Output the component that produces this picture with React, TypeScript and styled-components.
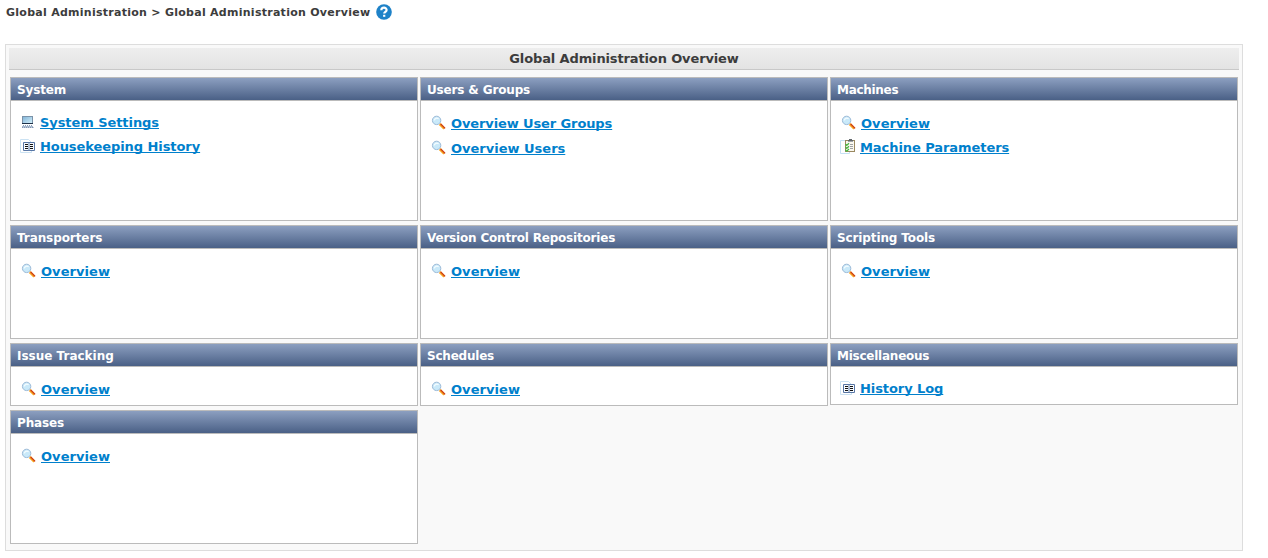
import React from "react";
import styled, { createGlobalStyle } from "styled-components";

const GlobalStyle = createGlobalStyle`
  * { box-sizing: border-box; }
  html, body { margin: 0; background: #fff; }
  body { font-family: "DejaVu Sans", Verdana, sans-serif; font-weight: bold; color: #3c3c3c; }
`;

const Page = styled.div`
  width: 1268px;
  height: 558px;
  padding: 0 25px 0 5px;
  overflow: hidden;
`;

const Breadcrumb = styled.header`
  display: flex;
  align-items: center;
  height: 24px;
  margin-bottom: 20px;
  padding-left: 1px;
  font-size: 11px;
  white-space: nowrap;
`;

const Trail = styled.span`
  width: 364px;
  margin-right: 6px;
  letter-spacing: 0.27px;
`;

const Panel = styled.main`
  width: 1238px;
  height: 507px;
  padding: 3px;
  background: #f9f9f9;
  border: 1px solid #ddd;
`;

const PanelTitle = styled.h1`
  height: 22px;
  margin: 0 0 7px;
  border-bottom: 1px solid #c8c8c8;
  background: linear-gradient(#eee, #e3e3e3);
  font-size: 13px;
  letter-spacing: -0.13px;
  line-height: 21px;
  text-align: center;
`;

const Grid = styled.div`
  display: grid;
  grid-template-columns: repeat(3, 408px);
  grid-template-rows: 144px 114px 63px 134px;
  gap: 4px 2px;
  margin-left: 1px;
`;

const Card = styled.section<{ $short?: boolean }>`
  height: ${(p) => (p.$short ? "62px" : "100%")};
  background: #fff;
  border: 1px solid #bbb;
`;

const CardHeader = styled.h2<{ $tracking: number }>`
  height: 23px;
  margin: 0;
  padding: 1px 0 0 6px;
  border-bottom: 1px solid #bbb;
  background: linear-gradient(#8c9fc0, #4a6086);
  color: #fff;
  font-size: 12px;
  letter-spacing: ${(p) => p.$tracking}px;
  line-height: 22px;
`;

const Links = styled.ul<{ $tight?: boolean }>`
  display: flex;
  flex-direction: column;
  margin: 0;
  padding: ${(p) => (p.$tight ? "14px" : "15px")} 0 0 9px;
  list-style: none;
`;

const Item = styled.li<{ $height: number; $magnifier: boolean }>`
  display: flex;
  height: ${(p) => p.$height}px;
  gap: ${(p) => (p.$magnifier ? 5 : 4)}px;
  svg { flex: none; overflow: visible; margin-top: ${(p) => (p.$magnifier ? -1 : 0)}px; }
`;

const Link = styled.a<{ $tracking: number }>`
  color: #0080cc;
  font-size: 13px;
  letter-spacing: ${(p) => p.$tracking}px;
  line-height: 16px;
  text-decoration: underline;
  text-decoration-thickness: 1px;
  text-decoration-skip-ink: none;
  text-underline-offset: 1px;
  white-space: nowrap;
`;

const HelpIcon = () => (
  <svg width="16" height="16" viewBox="0 0 16 16">
    <circle cx="8" cy="8" r="7.8" fill="#1e82c8" />
    <path d="M5.3 6.2C5.4 2.8 10.7 3 10.6 6C10.6 7.8 8.2 7.9 8.2 9.6" fill="none" stroke="#fff" strokeWidth="2.2" />
    <rect x="7.1" y="10.8" width="2.2" height="2" fill="#fff" />
  </svg>
);

const SearchIcon = () => (
  <svg width="16" height="16" viewBox="0 0 16 16">
    <path d="M9.8 9l4.6 4.6" stroke="#f7a21b" strokeWidth="2.6" />
    <path d="M10.6 8.9l4.5 4.5" stroke="#c9341c" strokeWidth="1.2" />
    <circle cx="6.6" cy="5.4" r="4.2" fill="#c9e9f9" stroke="#9dbbd8" />
    <path d="M4.3 5.4C4.6 3.2 7 2.6 8.6 3.7" fill="none" stroke="#f5fcff" strokeWidth="1.3" />
  </svg>
);

const ComputerIcon = () => (
  <svg width="16" height="16" viewBox="0 0 16 16">
    <defs>
      <linearGradient id="screen" x2="1" y2="1">
        <stop stopColor="#7fb2d6" />
        <stop offset="1" stopColor="#d7f2fc" />
      </linearGradient>
    </defs>
    <rect x="2.5" y="1.5" width="10" height="7" fill="url(#screen)" stroke="#7b93a9" />
    <path d="M2 8.5h11" stroke="#1e3148" />
    <path d="M3 10.5h9" stroke="#8b9fba" strokeDasharray="1 1" />
    <path d="M2 11.5h11" stroke="#a9b9ce" />
    <path d="M2 12.5h12" stroke="#8296b4" strokeDasharray="1.5 .5" />
  </svg>
);

const BookIcon = () => (
  <svg width="16" height="16" viewBox="0 0 16 16">
    <path d="M.5 .5h8l3 3v10H.5z" fill="#fff" stroke="#cbe2f3" />
    <path d="M3.5 3.5h11v8h-11z" fill="#f8fbff" stroke="#5876a5" />
    <path d="M9 3v9" stroke="#6984ad" />
    <path d="M5 5.5h3M5 7.5h3M5 9.5h3M10 5.5h3M10 7.5h3M10 9.5h3" stroke="#111" />
  </svg>
);

const ChecklistIcon = () => (
  <svg width="16" height="16" viewBox="0 0 16 16">
    <path d="M.5 .5h9v13h-9z" fill="#fff" stroke="#c5e1f4" />
    <rect x="5.5" y=".5" width="9" height="11" fill="#faf8ef" stroke="#9a8860" />
    <path d="M8 .5h5M9 -.5h3" stroke="#62676b" />
    <path d="M8 1.5h5" stroke="#a0a4a6" />
    <path d="M5.5 4.2l1.2 1.2L9 3.2M5.5 7.2l1.2 1.2L9 6.2M5.5 10l1.2 1.2L9 9" fill="none" stroke="#45b53f" strokeWidth="1.2" />
    <path d="M10 4.5h3M10 6.5h3M10 8.5h3" stroke="#a0a3a5" />
  </svg>
);

const icons = { search: SearchIcon, computer: ComputerIcon, book: BookIcon, checklist: ChecklistIcon };
type Entry = { label: string; icon: keyof typeof icons; height?: number; tracking?: number };
type Section = { title: string; entries: Entry[]; tight?: boolean; short?: boolean; tracking?: number };
const overview: Entry[] = [{ label: "Overview", icon: "search", tracking: 0.06 }];

const sections: Section[] = [
  {
    title: "System",
    tight: true,
    tracking: -0.15,
    entries: [
      { label: "System Settings", icon: "computer", tracking: -0.07 },
      { label: "Housekeeping History", icon: "book", tracking: -0.07 },
    ],
  },
  {
    title: "Users & Groups",
    tracking: -0.15,
    entries: [
      { label: "Overview User Groups", icon: "search", height: 25, tracking: -0.11 },
      { label: "Overview Users", icon: "search" },
    ],
  },
  {
    title: "Machines",
    tracking: -0.3,
    entries: [...overview, { label: "Machine Parameters", icon: "checklist", tracking: -0.07 }],
  },
  { title: "Transporters", tracking: -0.08, entries: overview },
  { title: "Version Control Repositories", tracking: -0.19, entries: overview },
  { title: "Scripting Tools", tracking: -0.12, entries: overview },
  { title: "Issue Tracking", tracking: 0, entries: overview },
  { title: "Schedules", tracking: -0.22, entries: overview },
  { title: "Miscellaneous", tracking: -0.24, tight: true, short: true, entries: [{ label: "History Log", icon: "book", tracking: -0.08 }] },
  { title: "Phases", tracking: -0.15, entries: overview },
];

export default function App() {
  return (
    <Page>
      <GlobalStyle />
      <Breadcrumb>
        <Trail>Global Administration &gt; Global Administration Overview</Trail>
        <HelpIcon />
      </Breadcrumb>
      <Panel>
        <PanelTitle>Global Administration Overview</PanelTitle>
        <Grid>
          {sections.map((s) => (
            <Card key={s.title} $short={s.short}>
              <CardHeader $tracking={s.tracking ?? 0}>{s.title}</CardHeader>
              <Links $tight={s.tight}>
                {s.entries.map((e) => {
                  const Icon = icons[e.icon];
                  return (
                    <Item key={e.label} $height={e.height ?? 24} $magnifier={e.icon === "search"}>
                      <Icon />
                      <Link $tracking={e.tracking ?? 0}>{e.label}</Link>
                    </Item>
                  );
                })}
              </Links>
            </Card>
          ))}
        </Grid>
      </Panel>
    </Page>
  );
}
